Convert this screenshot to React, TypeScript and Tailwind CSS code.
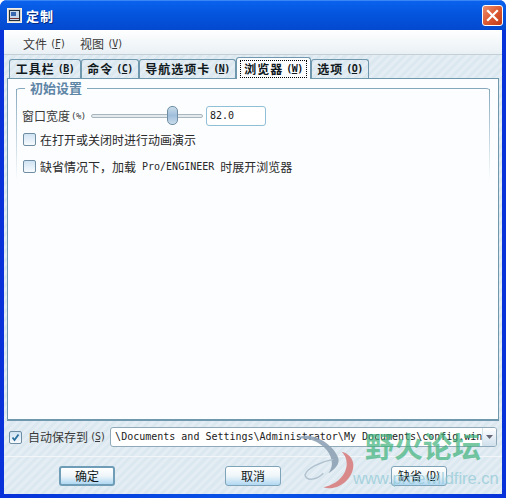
import React from "react";

const cjk = "font-['Noto_Sans_CJK_SC','Liberation_Sans',sans-serif]";
const mono = "font-['DejaVu_Sans_Mono','Noto_Sans_CJK_SC',monospace]";
const stripes = "bg-[repeating-linear-gradient(135deg,#dce8ef_0px,#dce8ef_3px,#e3edf3_3px,#e3edf3_6px)]";

function Key({ k }: { k: string }) {
  return (
    <span className={`${mono} text-[10px] tracking-[-1px]`}>
      (<span className="underline">{k}</span>)
    </span>
  );
}

function Tab({ label, k, active, width }: { label: string; k: string; active?: boolean; width: string }) {
  return (
    <div
      className={`${width} flex shrink-0 items-center justify-center rounded-t-[3px] border border-b-0 border-[#6f97ad] font-bold tracking-[1px] whitespace-nowrap text-[#101820] ${
        active ? "relative z-10 -mb-px h-[22px] bg-[#fbfdff]" : `h-[19px] ${stripes}`
      }`}
    >
      <span
        className={`flex items-center gap-[3px] ${active ? "h-[18px] border border-dotted border-black px-[3px]" : ""}`}
      >
        {label}
        <span className={`${mono} text-[10px] font-bold tracking-[-0.5px]`}>
          (<span className="underline">{k}</span>)
        </span>
      </span>
    </div>
  );
}

function Check({ checked }: { checked?: boolean }) {
  return (
    <span className="flex h-[13px] w-[13px] shrink-0 items-center justify-center rounded-[2px] border border-[#6f8ea3] bg-gradient-to-b from-[#cfe3f3] to-[#f8fbfd]">
      {checked && (
        <svg width="11" height="11" viewBox="0 0 11 11">
          <path d="M2.5 5.5 L4.5 8 L8.5 2.5" fill="none" stroke="#2a6f9e" strokeWidth="1.8" />
        </svg>
      )}
    </span>
  );
}

function Btn({ label, k, primary, className }: { label: string; k?: string; primary?: boolean; className?: string }) {
  return (
    <div
      className={`flex h-[20px] items-center justify-center gap-[3px] rounded-[3px] bg-gradient-to-b from-[#ffffff] via-[#eef5f9] to-[#b0d8f2] text-[#101820] ${
        primary ? "border-2 border-[#6f9db8]" : "border border-[#7fa3b8]"
      } ${className ?? ""}`}
    >
      {label}
      {k && <Key k={k} />}
    </div>
  );
}

export default function App() {
  return (
    <div className={`${cjk} relative h-[498px] w-[506px] overflow-hidden rounded-t-[7px] bg-gradient-to-r from-[#0831d9] via-[#0a55e8] to-[#0831d9] text-[12px] leading-none text-[#2a2a2a]`}>
      {/* Title bar */}
      <div className="flex h-[30px] items-center border-t border-[#3a85f5] bg-gradient-to-b from-[#0a62ec] via-[#0453dc] to-[#0349cf] pl-[7px] pr-[3px]">
        <svg width="15" height="15" viewBox="0 0 15 15" className="shrink-0">
          <rect x="0.5" y="0.5" width="14" height="14" fill="#d8d4cc" stroke="#f4f0e8" />
          <rect x="2.5" y="2.5" width="10" height="10" fill="#c8d8e8" stroke="#20303c" />
          <rect x="4" y="4" width="5" height="4" fill="#3868b0" />
          <path d="M3 10.5H12" stroke="#7a3030" />
        </svg>
        <span className="ml-[4px] text-[13px] font-bold tracking-[1px] text-white [text-shadow:1px_1px_0_#0a2a80]">定制</span>
        <div className="ml-auto flex h-[21px] w-[21px] items-center justify-center rounded-[3px] border border-white bg-gradient-to-br from-[#ec8f70] via-[#dc5a32] to-[#c03a14]">
          <svg width="13" height="13" viewBox="0 0 13 13">
            <path d="M2 2 L11 11 M11 2 L2 11" stroke="#fff" strokeWidth="2.2" strokeLinecap="square" />
          </svg>
        </div>
      </div>

      {/* Body */}
      <div className={`mx-[4px] flex h-[464px] flex-col ${stripes}`}>
        {/* Menu */}
        <div className="flex h-[25px] shrink-0 items-center gap-[15px] border-b border-[#c5d0d6] bg-gradient-to-b from-[#ffffff] to-[#e9f0f5] pl-[19px] pt-[3px] text-[#3a3a3a]">
          <span className="flex items-center gap-[3px]">文件<Key k="F" /></span>
          <span className="flex items-center gap-[3px]">视图<Key k="V" /></span>
        </div>

        {/* Tabs */}
        <div className="mt-[4px] flex h-[19px] shrink-0 items-end pl-[5px]">
          <Tab label="工具栏" k="B" width="w-[72px]" />
          <Tab label="命令" k="C" width="w-[58px]" />
          <Tab label="导航选项卡" k="N" width="w-[97px]" />
          <Tab label="浏览器" k="W" width="w-[75px]" active />
          <Tab label="选项" k="O" width="w-[58px]" />
        </div>

        {/* Panel */}
        <div className="mx-[3px] h-[343px] shrink-0 border border-b-2 border-[#6f97ad] bg-[#fbfdff] px-[8px] pt-[9px]">
          <div className="relative h-[92px] rounded-t-[4px] border-t border-[#86a8bc] px-[6px] pt-[17px]">
            <div className="absolute left-0 top-0 h-full w-px bg-gradient-to-b from-[#86a8bc] to-[#fbfdff]" />
            <div className="absolute right-0 top-0 h-full w-px bg-gradient-to-b from-[#86a8bc] to-[#fbfdff]" />
            <span className="absolute -top-[8px] left-[9px] bg-[#fbfdff] px-[5px] text-[13px] font-bold text-[#5f86a6]">初始设置</span>
            <div className="flex items-center text-[#3a3a3a]">
              <span className="flex w-[69px] items-center gap-[1px]">
                窗口宽度<span className={`${mono} text-[9px] tracking-[-0.5px]`}>(%)</span>
              </span>
              <div className="relative h-[4px] w-[112px] rounded-full border border-[#a9b6bd] bg-[#e4ebef]">
                <div className="absolute -top-[9px] left-[75px] h-[19px] w-[11px] rounded-[5px] border border-[#6f8ea3] bg-gradient-to-b from-[#c9dcea] via-[#9fbedb] to-[#c9dcea]" />
              </div>
              <div className={`${mono} ml-[3px] flex h-[20px] w-[60px] items-center rounded-[3px] border border-[#8fc0d8] bg-white pl-[3px] text-[10px] text-[#222]`}>
                82.0
              </div>
            </div>
            <div className="mt-[7px] flex items-center gap-[4px] pl-[1px]">
              <Check />
              <span>在打开或关闭时进行动画演示</span>
            </div>
            <div className="mt-[14px] flex items-center gap-[4px] pl-[1px]">
              <Check />
              <span className="flex items-center whitespace-nowrap">
                缺省情况下，加载<span className={`${mono} mx-[6px] text-[10px]`}>Pro/ENGINEER</span>时展开浏览器
              </span>
            </div>
          </div>
        </div>

        {/* Auto save */}
        <div className="mt-[6px] flex h-[20px] shrink-0 items-center pl-[5px] pr-[5px]">
          <Check checked />
          <span className="ml-[6px] flex items-center gap-[2px] text-[#3a3a3a]">自动保存到<Key k="S" /></span>
          <div className="ml-[5px] flex h-[20px] min-w-0 flex-1 items-center overflow-hidden rounded-[3px] border border-[#8fa9b8] bg-white">
            <span className={`${mono} min-w-0 flex-1 overflow-hidden whitespace-nowrap pl-[4px] text-[10px] text-[#222]`}>
              \Documents and Settings\Administrator\My Documents\config.win
            </span>
            <div className="flex h-full w-[14px] shrink-0 items-center justify-center border-l border-[#d5e2ea] bg-gradient-to-b from-white to-[#cfe0ec]">
              <svg width="7" height="4" viewBox="0 0 7 4"><path d="M0 0H7L3.5 4Z" fill="#667" /></svg>
            </div>
          </div>
        </div>

        {/* Buttons */}
        <div className="mt-[9px] h-px shrink-0 bg-[#f2f6f8]" />
        <div className="flex flex-1 items-start pt-[9px]">
          <Btn label="确定" primary className="ml-[55px] w-[56px]" />
          <Btn label="取消" className="ml-[110px] w-[56px]" />
          <Btn label="缺省" k="D" className="ml-[110px] w-[56px]" />
        </div>
      </div>

      {/* Watermark */}
      <div className="pointer-events-none absolute left-[290px] top-[430px] h-[68px] w-[216px]">
        <svg width="110" height="68" viewBox="0 0 330 204" className="absolute left-0 top-0 opacity-90">
          <path d="M20 25 C60 0 130 40 145 85 C150 105 130 120 115 130 C130 110 130 85 110 60 C85 30 50 25 20 25Z" fill="#8fa3b5" />
          <path d="M100 172 C140 185 190 150 190 105 C190 85 175 70 155 65 C170 80 175 100 165 125 C150 155 125 165 100 172Z" fill="#d97f7f" />
          <path d="M130 88 C90 95 50 115 45 135 C50 155 80 150 100 130" fill="none" stroke="#aabccb" strokeWidth="4" />
        </svg>
        <span className="absolute left-[75px] top-[1px] whitespace-nowrap text-[29px] font-bold text-[#3fb27c] opacity-70">野火论坛</span>
        <span className="absolute left-[63px] top-[40px] whitespace-nowrap font-['Liberation_Sans',sans-serif] text-[16.5px] text-[#8fc8d6] opacity-70">www.proewildfire.cn</span>
      </div>
    </div>
  );
}
